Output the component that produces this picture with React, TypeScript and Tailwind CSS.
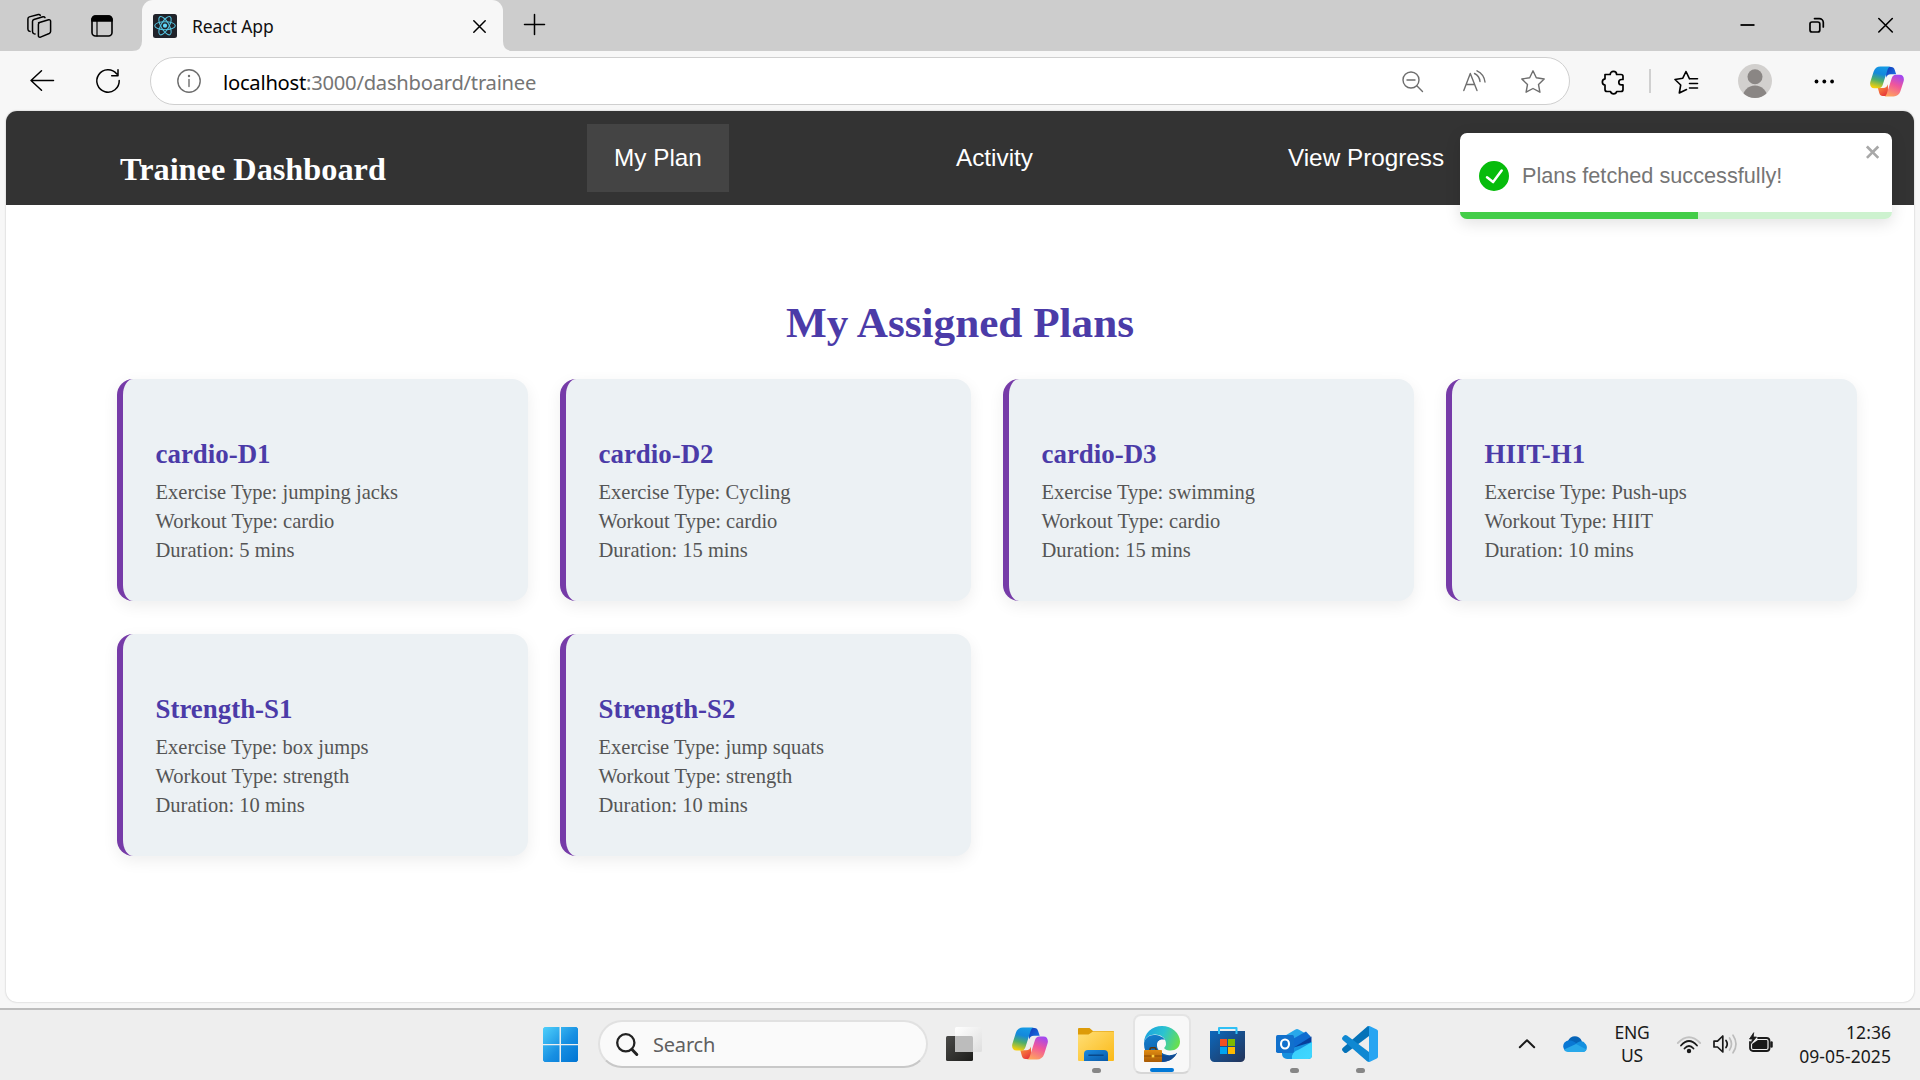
import React from "react";

const plans = [
  { name: "cardio-D1", exercise: "jumping jacks", workout: "cardio", mins: 5 },
  { name: "cardio-D2", exercise: "Cycling", workout: "cardio", mins: 15 },
  { name: "cardio-D3", exercise: "swimming", workout: "cardio", mins: 15 },
  { name: "HIIT-H1", exercise: "Push-ups", workout: "HIIT", mins: 10 },
  { name: "Strength-S1", exercise: "box jumps", workout: "strength", mins: 10 },
  { name: "Strength-S2", exercise: "jump squats", workout: "strength", mins: 10 },
];

type IconProps = { w: number; h: number; sw?: number; className?: string; children: React.ReactNode };

function Icon({ w, h, sw = 1.5, className = "", children }: IconProps) {
  return (
    <svg
      width={w}
      height={h}
      viewBox={`0 0 ${w} ${h}`}
      fill="none"
      stroke="currentColor"
      strokeWidth={sw}
      strokeLinecap="round"
      strokeLinejoin="round"
      className={"block shrink-0 overflow-visible " + className}
    >
      {children}
    </svg>
  );
}

function CopilotLogo({ id, className }: { id: string; className: string }) {
  return (
    <svg viewBox="0 0 36 34" className={"block shrink-0 " + className} preserveAspectRatio="none">
      <defs>
        <linearGradient id={id + "a"} x1="0.6" y1="0" x2="0.35" y2="1">
          <stop offset="0" stopColor="#159be5" />
          <stop offset="0.35" stopColor="#1488dc" />
          <stop offset="0.65" stopColor="#4fae6a" />
          <stop offset="1" stopColor="#f4d00c" />
        </linearGradient>
        <linearGradient id={id + "b"} x1="0.7" y1="0" x2="0.3" y2="1">
          <stop offset="0" stopColor="#a348f0" />
          <stop offset="0.45" stopColor="#f0569b" />
          <stop offset="1" stopColor="#ffa55c" />
        </linearGradient>
        <linearGradient id={id + "c"} x1="0" y1="0" x2="1" y2="1">
          <stop offset="0" stopColor="#1238b8" />
          <stop offset="1" stopColor="#1c7bea" />
        </linearGradient>
        <linearGradient id={id + "d"} x1="0" y1="0" x2="0.6" y2="1">
          <stop offset="0" stopColor="#ffa13c" />
          <stop offset="1" stopColor="#e83a3a" />
        </linearGradient>
      </defs>
      <path d="M17 1h5.500c2 0 3 1 3.600 3l1.600 5H22c-3 0-4 1.500-5 4z" fill={`url(#${id}c)`} />
      <path d="M19 33h-5.500c-2 0-3-1-3.600-3l-1.600-6H14c3 0 4-1.500 5-4z" fill={`url(#${id}d)`} />
      <path d="M11 .5h11.500c-2.200 0-3.200 1.500-4 4l-5 16c-.8 2.500-2 3.800-4.500 3.800H4.500C1 24.300-.6 21 .4 17.200l3.400-11C5 2.500 7.500.5 11 .5z" fill={`url(#${id}a)`} />
      <path d="M25 33.500H14c2.200 0 3.200-1.500 4-4l5-16c.8-2.500 2-3.800 4.500-3.800h4c3.500 0 5.100 3.300 4.100 7.100l-3.400 11c-1.200 3.700-3.700 5.700-7.200 5.700z" fill={`url(#${id}b)`} />
    </svg>
  );
}

function ReactFavicon() {
  return (
    <svg width="24" height="24" viewBox="0 0 24 24" className="block shrink-0">
      <rect width="24" height="24" rx="2.500" fill="#20232a" />
      <g fill="none" stroke="#55c4e0" strokeWidth="1.050">
        <ellipse cx="12" cy="11.700" rx="10.300" ry="4" />
        <ellipse cx="12" cy="11.700" rx="10.300" ry="4" transform="rotate(60 12 11.700)" />
        <ellipse cx="12" cy="11.700" rx="10.300" ry="4" transform="rotate(120 12 11.700)" />
      </g>
      <circle cx="12" cy="11.700" r="2.100" fill="#61dafb" />
    </svg>
  );
}

function TabStrip() {
  return (
    <div className="flex h-[51px] bg-[#cdcdcd] text-black">
      <Icon w={24} h={24} sw={1.5} className="ml-[27px] mt-[13.500px]">
        <path d="M11.600 8.800 21.600 5.800c1.200-.3 2 .3 2 1.500v10.200c0 1-.5 1.600-1.400 2l-8.700 3.600c-1.200.4-2.100-.2-2.100-1.400V10.600c0-1 .4-1.600 1.200-1.800" />
        <path d="M8 20 6.700 19.600c-.9-.4-1.200-1-1.200-2V7.500c0-1 .5-1.700 1.400-2L16 2.700c.9-.2 1.600.1 2 .9" />
        <path d="M3 17.400 1.900 17C1.200 16.600.9 16 .9 15V4.900c0-1 .5-1.700 1.400-2L11.300.5c.9-.2 1.600.1 2 .9" />
      </Icon>
      <Icon w={22} h={22} sw={1.6} className="ml-[40px] mt-[15px]">
        <rect x="1" y="1" width="20" height="20" rx="3.500" />
        <path d="M1 6V4.500A3.500 3.500 0 0 1 4.500 1h13A3.500 3.500 0 0 1 21 4.500V6z" fill="currentColor" />
        <path d="M6 6v15" strokeWidth="1.200" />
      </Icon>
      <svg width="10" height="51" viewBox="0 0 10 51" className="ml-[19px] block shrink-0">
        <path d="M0 51Q10 51 10 41V51z" fill="#f7f7f7" />
      </svg>
      <div className="flex h-[51px] w-[361px] shrink-0 rounded-t-[11px] bg-[#f7f7f7]">
        <div className="ml-[11px] mt-[14px]">
          <ReactFavicon />
        </div>
        <div className="ml-[15px] mt-[13px] font-['Noto_Sans',sans-serif] text-[17.500px] leading-[26px] tracking-[-0.100px] text-[#111]">
          React App
        </div>
        <Icon w={13} h={13} sw={1.5} className="ml-auto mr-[17px] mt-[20px]">
          <path d="M.8.8 12.200 12.200M12.200.8.8 12.200" />
        </Icon>
      </div>
      <svg width="10" height="51" viewBox="0 0 10 51" className="block shrink-0">
        <path d="M10 51Q0 51 0 41V51z" fill="#f7f7f7" />
      </svg>
      <Icon w={21} h={21} sw={1.5} className="ml-[11px] mt-[14px]">
        <path d="M10.500.5v20M.5 10.500h20" />
      </Icon>
      <div className="ml-auto flex text-black">
        <Icon w={15} h={16} sw={1.8} className="mt-[17px]">
          <path d="M.5 8h14" strokeLinecap="butt" />
        </Icon>
        <Icon w={15} h={16} sw={1.7} className="ml-[54px] mt-[17px]">
          <rect x="1" y="5" width="9.800" height="10" rx="2" />
          <path d="M5.500 1.600h4.800a4 4 0 0 1 4 4V10" />
        </Icon>
        <Icon w={15} h={16} sw={1.6} className="ml-[54px] mr-[27px] mt-[17px]">
          <path d="M.8 1.500l13.500 13.500M14.300 1.500.8 15" />
        </Icon>
      </div>
    </div>
  );
}

function Toolbar() {
  return (
    <div className="flex h-[60px] items-center bg-[#f7f7f7] text-black">
      <Icon w={24} h={21} sw={1.5} className="ml-[30px] mb-[1px]">
        <path d="M11.500.8 1 10.500 11.500 20.200M1 10.500h22.500" />
      </Icon>
      <Icon w={24} h={24} sw={1.5} className="ml-[42px]">
        <path d="M20.800 5A11.200 11.200 0 1 0 23.200 11.500M22 .8V6.700H15.700" />
      </Icon>
      <div className="ml-[30px] flex h-[48px] w-[1420px] shrink-0 items-center rounded-full border border-[#cfcfcf] bg-white text-[#6e6e6e]">
        <Icon w={24} h={24} sw={1.4} className="ml-[26px]">
          <circle cx="12" cy="12" r="11.200" />
          <path d="M12 10.500v7" />
          <circle cx="12" cy="7" r=".5" fill="currentColor" />
        </Icon>
        <div className="ml-[22px] mt-[2px] font-['Noto_Sans',sans-serif] text-[20.200px] leading-[28px] tracking-[-0.250px] text-[#757575]">
          <span className="text-black">localhost</span>:3000/dashboard/trainee
        </div>
        <Icon w={21} h={21} sw={1.4} className="ml-auto">
          <circle cx="9" cy="9" r="8" />
          <path d="M5 9h8M14.800 14.800 20.500 20.500" />
        </Icon>
        <Icon w={22} h={22} sw={1.4} className="ml-[40px] mb-[1px]">
          <path d="M.8 20.500 7.300 3.500 14 20.500M3.200 14.500h8.300" />
          <path d="M11.500 3.500Q16.500 6 17 11.500M14 .8Q21 4 22 12" />
        </Icon>
        <Icon w={24} h={23} sw={1.4} className="ml-[36px] mr-[24px]">
          <path d="M12 .8 15.300 7.800 23.200 9 17.500 14.500 18.900 22.200 12 18.500 5.100 22.200 6.500 14.500.8 9 8.700 7.800z" />
        </Icon>
      </div>
      <Icon w={23} h={24} sw={1.7} className="ml-[32px] mt-[1px]">
        <path d="M3 4.500h5.200a3.200 3.200 0 1 1 6.400 0h4.400a2 2 0 0 1 2 2V9.500h-1.500a2.700 2.700 0 0 0 0 5.400H21v4.600a2 2 0 0 1-2 2h-4.300a3.200 3.200 0 0 1-6.200 0H5a2 2 0 0 1-2-2V15.200a3.200 3.200 0 0 1 0-6.300z" />
      </Icon>
      <div className="ml-[24px] h-[24px] w-[2px] bg-[#d0d0d0]" />
      <Icon w={24} h={24} sw={1.6} className="ml-[23px] mt-[1px]">
        <path d="M15.500 8.800 12 1.500 8.800 8.200 1 9.500 6.700 15 5.300 23 12.500 19.500M15.500 8.800h8M15.500 13.500h8M15.500 18h8" />
      </Icon>
      <svg width="34" height="34" viewBox="0 0 34 34" className="ml-[40px] block shrink-0">
        <defs>
          <clipPath id="avatar">
            <circle cx="17" cy="17" r="17" />
          </clipPath>
        </defs>
        <circle cx="17" cy="17" r="17" fill="#d2d0ce" />
        <g clipPath="url(#avatar)" fill="#8a8684">
          <circle cx="17" cy="12.700" r="7.500" />
          <ellipse cx="17" cy="34" rx="12.500" ry="12.500" />
        </g>
      </svg>
      <Icon w={20} h={4} className="ml-[42px]">
        <g fill="currentColor" stroke="none">
          <circle cx="2.500" cy="2.500" r="1.900" />
          <circle cx="10.300" cy="2.500" r="1.900" />
          <circle cx="18.100" cy="2.500" r="1.900" />
        </g>
      </Icon>
      <CopilotLogo id="tb" className="ml-[36px] h-[31px] w-[34px]" />
    </div>
  );
}

function Toast() {
  return (
    <div className="absolute right-[22px] top-[22px] flex h-[86px] w-[432px] flex-col overflow-hidden rounded-[7px] bg-white shadow-[0_4px_16px_rgba(0,0,0,0.12)]">
      <div className="flex h-[79px] items-center">
        <svg width="30" height="30" viewBox="0 0 24 24" className="ml-[19px] mt-[6px] block shrink-0" fill="#07bc0c">
          <path d="M12 0a12 12 0 1012 12A12.014 12.014 0 0012 0zm6.927 8.200l-6.845 9.289a1.011 1.011 0 01-1.430.188l-4.888-3.908a1 1 0 111.250-1.562l4.076 3.261 6.227-8.451a1 1 0 111.610 1.183z" />
        </svg>
        <div className="ml-[13px] mt-[6px] font-['Liberation_Sans',sans-serif] text-[21.700px] leading-[30px] text-[#757575]">
          Plans fetched successfully!
        </div>
        <svg width="14" height="16" viewBox="0 0 14 16" className="ml-auto mr-[12px] mb-[42px] block shrink-0">
          <path fill="#a8a8a8" fillRule="evenodd" d="M7.710 8.230l3.750 3.750-1.480 1.480-3.750-3.750-3.750 3.750L1 11.980l3.750-3.750L1 4.480 2.480 3l3.750 3.750L9.980 3l1.480 1.480-3.750 3.750z" transform="translate(-1.300 -2.300) scale(1.270)" />
        </svg>
      </div>
      <div className="h-[7px] bg-[#cdf2cf]">
        <div className="h-full w-[238px] bg-[#43cd48]" />
      </div>
    </div>
  );
}

function Page() {
  return (
    <div className="relative mx-[6px] h-[891px] overflow-hidden rounded-[11px] bg-white shadow-[0_0_2px_rgba(0,0,0,0.25)]">
      <nav className="flex h-[94px] items-center bg-[#333] font-['Liberation_Sans',sans-serif] text-[24.300px] leading-[28px] text-white">
        <div className="ml-[114px] mt-[22px] w-[467px] font-['Liberation_Serif',serif] text-[32.300px] font-bold leading-[36px]">
          Trainee Dashboard
        </div>
        <div className="flex h-[68px] w-[142px] items-center justify-center bg-[#444]">My Plan</div>
        <div className="ml-[227px]">Activity</div>
        <div className="ml-[255px] whitespace-nowrap">View Progress</div>
      </nav>
      <h1 className="mt-[93px] text-center font-['Liberation_Serif',serif] text-[43.200px] font-bold leading-[50px] text-[#4b3ba8]">
        My Assigned Plans
      </h1>
      <div className="ml-[111px] mt-[31px] grid w-[1740px] grid-cols-4 gap-x-[32px] gap-y-[32.400px]">
        {plans.map((p) => (
          <div
            key={p.name}
            className="h-[222.400px] rounded-[16px] border-l-[6px] border-[#763ba8] bg-[#ecf1f4] pl-[32.500px] pt-[59px] font-['Liberation_Serif',serif] text-[20.520px] leading-[29.200px] text-[#555] shadow-[0_5px_16px_rgba(0,0,0,0.07)]"
          >
            <h2 className="mb-[8px] text-[26.900px] font-bold leading-[32px] text-[#4b3ba8]">{p.name}</h2>
            <p>Exercise Type: {p.exercise}</p>
            <p>Workout Type: {p.workout}</p>
            <p>Duration: {p.mins} mins</p>
          </div>
        ))}
      </div>
      <Toast />
    </div>
  );
}

function Slot({ pill = false, children }: { pill?: boolean; children: React.ReactNode }) {
  return (
    <div className="flex h-[70px] w-[66px] shrink-0 flex-col items-center pt-[16px]">
      {children}
      {pill && <div className="mt-[6px] h-[5px] w-[9px] rounded-full bg-[#868686]" />}
    </div>
  );
}

function Taskbar() {
  return (
    <div className="flex h-[72px] border-t-2 border-[#bdbdbd] bg-[#eeeeee] font-['Noto_Sans',sans-serif]">
      <svg width="35" height="35" viewBox="0 0 35 35" className="ml-[543px] mt-[17px] block shrink-0">
        <defs>
          <linearGradient id="win" gradientUnits="userSpaceOnUse" x1="0" y1="0" x2="35" y2="35">
            <stop offset="0" stopColor="#4fd0fb" />
            <stop offset="0.550" stopColor="#178fe2" />
            <stop offset="1" stopColor="#0074d3" />
          </linearGradient>
        </defs>
        <path fill="url(#win)" d="M1.500 0H16.500V17H0V1.500zM18 0h15.500L35 1.500V17H18zM0 18.300h16.500V35H1.500L0 33.500zM18 18.300h17v15.200L33.500 35H18z" />
      </svg>
      <div className="ml-[20px] mt-[10px] flex h-[48px] w-[330px] shrink-0 items-center rounded-full border-2 border-[#e1e1e1] border-b-[#c8c8c8] bg-[#fafafa]">
        <Icon w={22} h={23} sw={2.300} className="ml-[16px] text-[#222]">
          <circle cx="9.800" cy="9.800" r="8.600" />
          <path d="M16 16.500l4.800 5" strokeWidth="3" />
        </Icon>
        <span className="ml-[15px] mt-[1px] text-[20px] leading-[28px] tracking-[-0.200px] text-[#5f5f5f]">Search</span>
      </div>
      <div className="ml-[3px] flex">
        <Slot>
          <svg width="36" height="36" viewBox="0 0 36 36" className="block shrink-0">
            <defs>
              <linearGradient id="tvd" x1="0" y1="0" x2="1" y2="1">
                <stop offset="0" stopColor="#4a4a48" />
                <stop offset="1" stopColor="#1d1d1b" />
              </linearGradient>
              <linearGradient id="tvl" x1="0" y1="0" x2="1" y2="1">
                <stop offset="0" stopColor="#fff" />
                <stop offset="1" stopColor="#dedede" />
              </linearGradient>
            </defs>
            <rect y="10" width="27" height="25" rx="1.500" fill="url(#tvd)" />
            <rect x="9" y="1" width="27" height="25" rx="1.500" fill="url(#tvl)" />
            <path d="M9 10h16.500a1.500 1.500 0 0 1 1.500 1.500V26H9z" fill="#bcbcbc" />
          </svg>
        </Slot>
        <Slot>
          <CopilotLogo id="dock" className="mt-[1px] h-[33px] w-[36px]" />
        </Slot>
        <Slot pill>
          <svg width="36" height="36" viewBox="0 0 36 36" className="block shrink-0">
            <defs>
              <linearGradient id="fo" x1="0" y1="0" x2="1" y2="1">
                <stop offset="0" stopColor="#ffdf77" />
                <stop offset="1" stopColor="#fbb917" />
              </linearGradient>
              <linearGradient id="fb" x1="0" y1="0" x2="1" y2="1">
                <stop offset="0" stopColor="#1a8be0" />
                <stop offset="1" stopColor="#0a59a8" />
              </linearGradient>
            </defs>
            <path d="M0 3a1 1 0 0 1 1-1h10.500L15 5h20a1 1 0 0 1 1 1v4H0z" fill="#dd9b08" />
            <path d="M0 8.500h10.500L15 5.500h20a1 1 0 0 1 1 1V34a1 1 0 0 1-1 1H1a1 1 0 0 1-1-1z" fill="url(#fo)" />
            <path d="M6 35V28a4 4 0 0 1 4-4h16a4 4 0 0 1 4 4v7z" fill="url(#fb)" />
            <path d="M11 29.200h14" stroke="#08488a" strokeWidth="1.600" strokeLinecap="round" />
          </svg>
        </Slot>
        <div className="mx-[4px] mt-[4px] flex h-[60px] w-[58px] shrink-0 flex-col items-center rounded-[8px] border-2 border-[#e4e4e4] border-b-[#d6d6d6] bg-[#f8f8f8] pt-[10px]">
          <svg width="36" height="36" viewBox="0 0 36 36" className="block shrink-0">
            <defs>
              <linearGradient id="e1" x1="0" y1="0.300" x2="1" y2="0.600">
                <stop offset="0" stopColor="#1ba3e0" />
                <stop offset="0.500" stopColor="#2cc3d0" />
                <stop offset="1" stopColor="#69e04d" />
              </linearGradient>
              <linearGradient id="e2" x1="0" y1="0" x2="0.400" y2="1">
                <stop offset="0" stopColor="#1580cf" />
                <stop offset="1" stopColor="#0c59a4" />
              </linearGradient>
              <linearGradient id="e3" x1="0" y1="0" x2="0" y2="1">
                <stop offset="0" stopColor="#e08c12" />
                <stop offset="1" stopColor="#a95b05" />
              </linearGradient>
            </defs>
            <path d="M0 17C0 7 8 0 18 0s18 7.500 18 15.500c0 6-4.500 9-9.500 9-4 0-6.500-1.500-6.500-3 0-.8 1.800-1.500 1.800-4.500 0-5-5-8.500-10.800-8.500C5 8.500 1 12 0 17z" fill="url(#e1)" />
            <path d="M0 18c0-5 4.500-9 10-9 5 0 9.500 2 11 5-5-1.500-8 1.500-8 5.500 0 5.500 6 9 12.500 9 3 0 5-.8 7.500-1.800C30.500 32 25 36 18 36 8 36 0 28 0 18z" fill="url(#e2)" />
            <path d="M14 25c1.500 3 6 5 10.500 5 3.500 0 6.500-1 8.500-3.300C30.500 32 25 36 18 36z" fill="#124a91" />
            <circle cx="17.600" cy="18.300" r="4.300" fill="#f8f8f8" />
            <path d="M15 21.500c2 3.500 6 5.300 11 5.300 3 0 5-.6 7-1.400-.3 1-1 2-1.700 2.600C24 31 16 28 14.500 21z" fill="#f8f8f8" />
            <path d="M6 24.500v-1.300c0-1 .6-1.500 1.500-1.500h3c.9 0 1.500.5 1.500 1.500v1.300" fill="none" stroke="#5f3205" strokeWidth="1.500" />
            <rect y="24" width="18" height="12" rx=".8" fill="url(#e3)" />
            <path d="M0 30h18" stroke="#8a4804" strokeWidth="1" />
            <rect x="7.700" y="28.800" width="2.600" height="2.600" fill="#ffd33d" />
          </svg>
          <div className="mt-[6px] h-[5px] w-[24px] rounded-full bg-[#0078d7]" />
        </div>
        <Slot>
          <svg width="36" height="36" viewBox="0 0 36 36" className="block shrink-0">
            <defs>
              <linearGradient id="st" x1="0" y1="0" x2="1" y2="1">
                <stop offset="0" stopColor="#0c68bc" />
                <stop offset="1" stopColor="#243358" />
              </linearGradient>
            </defs>
            <path d="M0 5h35v26.500A4.500 4.500 0 0 1 30.500 36h-26A4.500 4.500 0 0 1 0 31.500z" fill="url(#st)" />
            <path d="M9 8V2h17.500v6" fill="none" stroke="#2fc0f5" strokeWidth="2" strokeLinejoin="round" />
            <path d="M10 13h7v7h-7z" fill="#f25022" />
            <path d="M18 13h7v7h-7z" fill="#7fba00" />
            <path d="M10 21h7v7h-7z" fill="#00a4ef" />
            <path d="M18 21h7v7h-7z" fill="#ffb900" />
          </svg>
        </Slot>
        <Slot pill>
          <svg width="36" height="36" viewBox="0 0 36 36" className="block shrink-0">
            <defs>
              <linearGradient id="ol" x1="0" y1="0" x2="1" y2="1">
                <stop offset="0" stopColor="#38cdfb" />
                <stop offset="1" stopColor="#3fd8ff" />
              </linearGradient>
            </defs>
            <path d="M6 11.500 19 3.700a4 4 0 0 1 4 0L34 10v17H6z" fill="#28a8ea" />
            <path d="M15 14 30 5.500l5 5.500L18 24z" fill="#0f6cd0" />
            <path d="M17 22 35.500 10.500V17L19 27z" fill="#07409c" />
            <path d="M36 16v13a4 4 0 0 1-4 4H11a5 5 0 0 1-5-5v-3z" fill="#1590df" />
            <path d="M36 16v13a4 4 0 0 1-4 4H16q-1-7 7-9.500z" fill="url(#ol)" />
            <rect y="9" width="18" height="18" rx="1.700" fill="#1170cc" />
            <ellipse cx="9" cy="18" rx="4" ry="4.500" fill="none" stroke="#fff" strokeWidth="2.100" />
          </svg>
        </Slot>
        <Slot pill>
          <svg width="36" height="36" viewBox="0 0 36 36" className="block shrink-0">
            <path d="M27 0v10L5 26.500c-1 .8-2 .7-2.900 0L.7 25c-.9-.9-.9-2 0-2.900L25 .7C25.600.1 26.300 0 27 0z" fill="#0472b8" />
            <path d="M27 36V26L5 9.500c-1-.8-2-.7-2.900 0L.7 11c-.9.9-.9 2 0 2.900L25 35.300c.6.6 1.300.7 2 .7z" fill="#0f88d2" />
            <path d="M26 .3c.7-.4 1.300-.3 2 0l6.800 3.200c.8.400 1.200 1 1.200 1.800v25.400c0 .8-.4 1.400-1.200 1.800L28 35.700c-.7.300-1.300.4-2 0 .7-.2 1-.7 1-1.500V1.800c0-.8-.3-1.300-1-1.500z" fill="#28a5f2" />
          </svg>
        </Slot>
      </div>
      <div className="ml-auto flex h-[68px] items-center text-[#1a1a1a]">
        <Icon w={16} h={9} sw={2} className="mb-[2px]">
          <path d="M.8 8.200 8 1.200l7.200 7" />
        </Icon>
        <svg width="24" height="16" viewBox="0 0 24 16" className="ml-[28px] mb-[1px] block shrink-0">
          <path d="M5 5C7-.5 16-2 19 5.500L14 9z" fill="#0664b8" />
          <path d="M5.500 4.500C9 4 12 6 16 9L3 15C-1 13-1 5.500 5.500 4.500z" fill="#0a78d4" />
          <path d="M12 9C15 5 20 4 22 7.500c3 2 2.500 8-2 8.500H12z" fill="#1490df" />
          <path d="M1 13.500 13 8l10.500 5.500C23 15 21.500 16 20 16H5c-2 0-3.300-1-4-2.500z" fill="#28a8ea" />
        </svg>
        <div className="ml-[25px] w-[40px] text-center text-[17.500px] leading-[23px] tracking-[-0.300px]">
          ENG
          <br />
          US
        </div>
        <Icon w={24} h={17} sw={1.800} className="ml-[25px]">
          <path d="M.8 7Q12-4.500 23.200 7" stroke="#c2c2c2" />
          <path d="M4 9.500Q12 .5 20 9.500M7.500 12.500Q12 7.500 16.500 12.500" />
          <circle cx="12" cy="15" r="1.300" fill="currentColor" />
        </Icon>
        <Icon w={24} h={20} sw={1.700} className="ml-[12px]">
          <path d="M1 7.200h3.500L9.800 2v16L4.500 13H1z" />
          <path d="M13 6.500q2.500 3.500 0 7" />
          <path d="M16.500 4q4 6 0 12M20 1.200q6 8.800 0 17.600" stroke="#bcbcbc" />
        </Icon>
        <Icon w={24} h={19} sw={1.800} className="ml-[12px] mb-[4px]">
          <path d="M9 5h8.500a3 3 0 0 1 3 3v7a3 3 0 0 1-3 3H4a3 3 0 0 1-3-3V9" />
          <path d="M9 8h8.500v7H4v-3.500z" fill="currentColor" />
          <path d="M22.500 9.500v4" strokeWidth="2.500" />
          <path d="M4.500 0 .5 6h3L2 10.500 7.500 4H4.500z" fill="currentColor" strokeWidth=".8" />
        </Icon>
        <div className="mr-[29px] w-[118px] text-right text-[17.500px] leading-[24px] tracking-[0.050px]">
          12:36
          <br />
          09-05-2025
        </div>
      </div>
    </div>
  );
}

export default function App() {
  return (
    <div className="h-[1080px] w-[1920px] overflow-hidden bg-[#f7f7f7]">
      <TabStrip />
      <Toolbar />
      <div className="h-[897px]">
        <Page />
      </div>
      <Taskbar />
    </div>
  );
}
